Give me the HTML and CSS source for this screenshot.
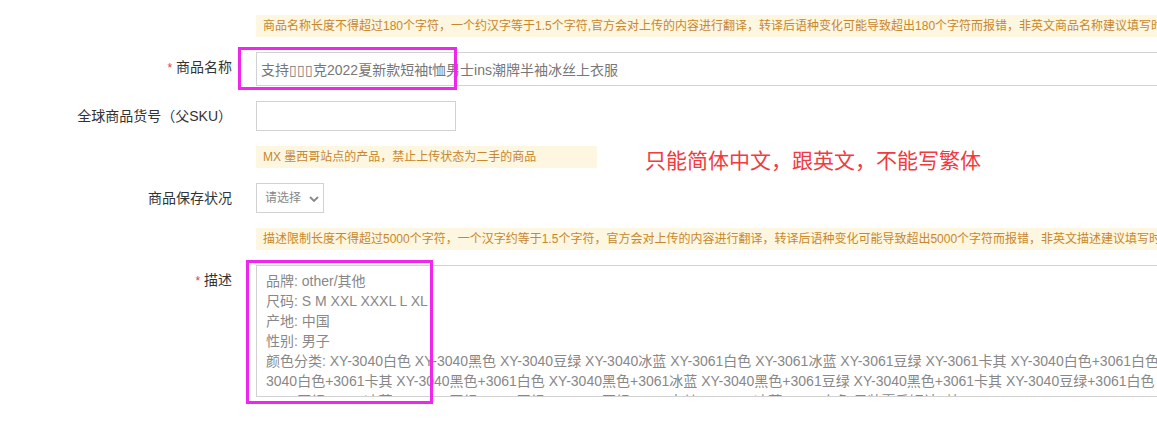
FILE: index.html
```html
<!DOCTYPE html>
<html lang="zh-CN">
<head>
  <meta charset="UTF-8" />
  <meta name="viewport" content="width=device-width, initial-scale=1" />
  <title>商品信息</title>
  <link rel="stylesheet" href="styles.css">
</head>
<body>
  <div class="form">
    <div class="row">
      <div class="label"></div>
      <div class="field">
        <div class="notice notice-wide">商品名称长度不得超过180个字符，一个约汉字等于1.5个字符,官方会对上传的内容进行翻译，转译后语种变化可能导致超出180个字符而报错，非英文商品名称建议填写时不要超过限制长度</div>
      </div>
    </div>

    <div class="row">
      <div class="label"><span class="required">*</span> 商品名称</div>
      <div class="field mark-wrap">
        <input type="text" class="input input-title" value="支持▯▯▯克2022夏新款短袖t恤男士ins潮牌半袖冰丝上衣服" />
        <div class="mark mark-title"></div>
      </div>
    </div>

    <div class="row">
      <div class="label">全球商品货号（父SKU）</div>
      <div class="field">
        <input type="text" class="input input-sku" />
      </div>
    </div>

    <div class="row">
      <div class="label"></div>
      <div class="field field-inline">
        <div class="notice notice-short">MX 墨西哥站点的产品，禁止上传状态为二手的商品</div>
        <div class="remark">只能简体中文，跟英文，不能写繁体</div>
      </div>
    </div>

    <div class="row">
      <div class="label">商品保存状况</div>
      <div class="field">
        <div class="select-wrap">
          <select class="select">
            <option>请选择</option>
            <option>全新</option>
            <option>二手</option>
          </select>
          <svg class="chevron" width="10" height="6" viewBox="0 0 10 6">
            <path d="M1 1 L5 5 L9 1" fill="none" stroke="#888" stroke-width="1.8" />
          </svg>
        </div>
      </div>
    </div>

    <div class="row">
      <div class="label"></div>
      <div class="field">
        <div class="notice notice-wide">描述限制长度不得超过5000个字符，一个汉字约等于1.5个字符，官方会对上传的内容进行翻译，转译后语种变化可能导致超出5000个字符而报错，非英文描述建议填写时不要超过限制长度</div>
      </div>
    </div>

    <div class="row">
      <div class="label"><span class="required">*</span> 描述</div>
      <div class="field mark-wrap">
        <textarea class="textarea" wrap="off">品牌: other/其他
尺码: S M XXL XXXL L XL
产地: 中国
性别: 男子
颜色分类: XY-3040白色 XY-3040黑色 XY-3040豆绿 XY-3040冰蓝 XY-3061白色 XY-3061冰蓝 XY-3061豆绿 XY-3061卡其 XY-3040白色+3061白色 XY-
3040白色+3061卡其 XY-3040黑色+3061白色 XY-3040黑色+3061冰蓝 XY-3040黑色+3061豆绿 XY-3040黑色+3061卡其 XY-3040豆绿+3061白色 XY-
3040豆绿+3061冰蓝 XY-3040豆绿+3061豆绿 XY-3040豆绿+3061卡其 XY-3040冰蓝+3061白色 男装夏季短袖T恤</textarea>
        <div class="mark mark-desc"></div>
      </div>
    </div>
  </div>
</body>
</html>
```

FILE: styles.css
```css
body {
  margin: 0;
  background: #fff;
  font-family: 'Liberation Sans', 'Noto Sans CJK SC', sans-serif;
  color: #333;
  overflow: hidden;
}

.form {
  width: 1500px;
  padding-top: 15px;
}

.row {
  display: grid;
  grid-template-columns: 232px 1fr;
  column-gap: 24px;
  margin-bottom: 15px;
}

.label {
  text-align: right;
  font-size: 14px;
  line-height: 30px;
  color: #333;
}

.required {
  color: #e4393c;
  font-size: 12px;
}

.field {
  min-width: 0;
}

.field-inline {
  display: flex;
  align-items: flex-start;
  height: 22px;
}

.mark-wrap {
  position: relative;
}

.notice {
  box-sizing: border-box;
  height: 22px;
  line-height: 22px;
  padding: 0 7px;
  font-size: 12px;
  color: #c8872d;
  background: #fdf6e1;
  white-space: nowrap;
  overflow: hidden;
}

.notice-wide {
  width: 1100px;
}

.notice-short {
  width: 341px;
  flex-shrink: 0;
}

.remark {
  margin-left: 48px;
  margin-top: 4px;
  font-size: 21px;
  line-height: 22px;
  color: #f23a3f;
  white-space: nowrap;
}

.input {
  box-sizing: border-box;
  border: 1px solid #d2d2d2;
  padding: 0 4px;
  font-family: inherit;
  font-size: 14px;
  color: #777;
  outline: none;
  display: block;
}

.input-title {
  width: 1100px;
  height: 34px;
}

.input-sku {
  width: 200px;
  height: 30px;
}

.select-wrap {
  position: relative;
  width: 68px;
}

.select {
  appearance: none;
  -webkit-appearance: none;
  box-sizing: border-box;
  width: 68px;
  height: 30px;
  border: 1px solid #d2d2d2;
  border-radius: 0;
  background: #fff;
  padding: 0 0 0 8px;
  font-family: inherit;
  font-size: 12px;
  color: #888;
  outline: none;
  display: block;
}

.chevron {
  position: absolute;
  right: 5px;
  top: 13px;
}

.textarea {
  box-sizing: border-box;
  display: block;
  width: 1100px;
  height: 132px;
  border: 1px solid #d2d2d2;
  padding: 5px 9px;
  font-family: inherit;
  font-size: 14px;
  line-height: 20px;
  color: #888;
  resize: none;
  overflow: hidden;
  white-space: pre;
  outline: none;
}

.mark {
  position: absolute;
  box-sizing: border-box;
  border: 3px solid #ee26ee;
  pointer-events: none;
}

.mark-title {
  left: -18px;
  top: -5px;
  width: 219px;
  height: 43px;
}

.mark-desc {
  left: -10px;
  top: -5px;
  width: 187px;
  height: 144px;
}
```
